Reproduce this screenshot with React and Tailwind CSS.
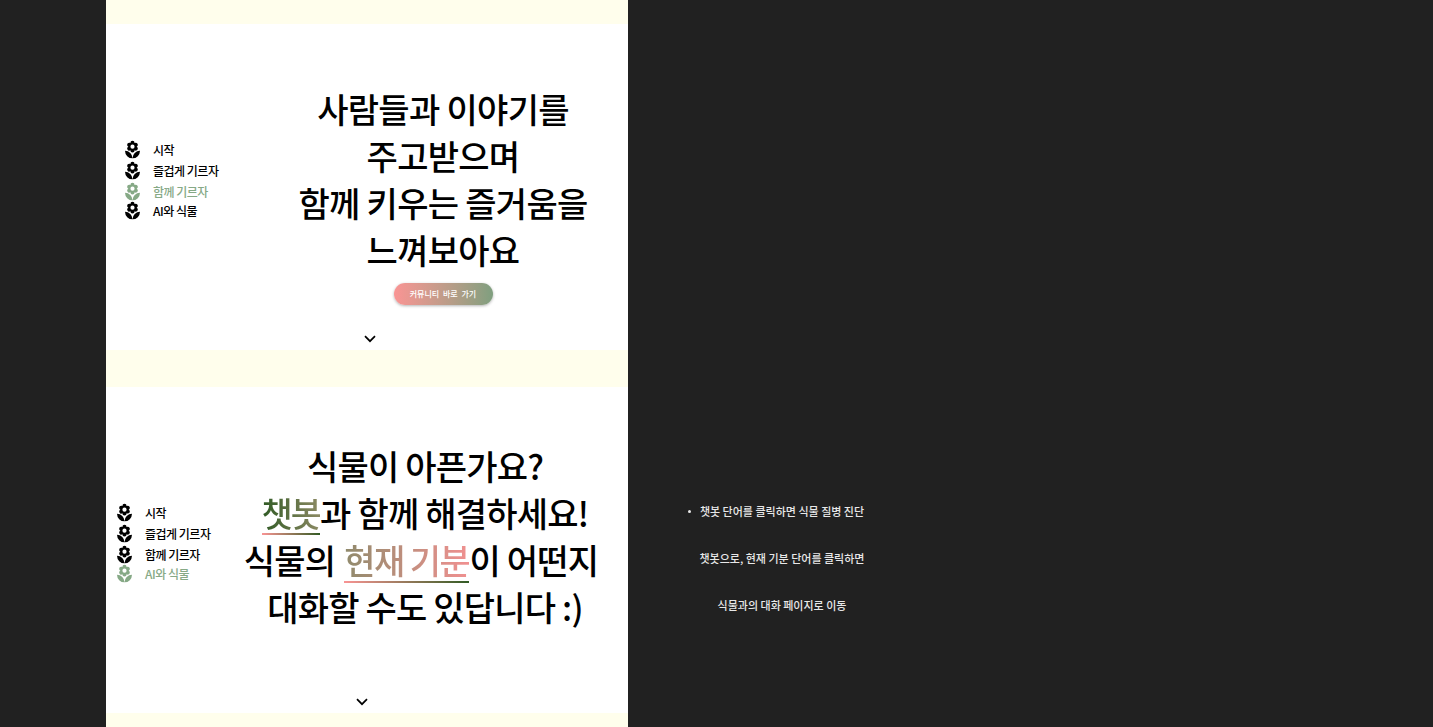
import React from 'react';
import { MdLocalFlorist } from 'react-icons/md';

const NAV = ['시작', '즐겁게 기르자', '함께 기르자', 'AI와 식물'];

const Nav = ({ active, className }) => (
  <ul className={`flex flex-col ${className}`}>
    {NAV.map((label, i) => (
      <li
        key={label}
        className={`flex items-center gap-[10px] text-[12px] tracking-[-0.5px] font-medium ${i === 3 ? 'h-[18px]' : 'h-[21px]'} ${i === active ? 'text-[#86a986]' : 'text-black'}`}
      >
        <MdLocalFlorist className="w-[21px] h-[20px] shrink-0" />
        <span>{label}</span>
      </li>
    ))}
  </ul>
);

const Chevron = ({ className }) => (
  <svg viewBox="0 0 12 8" className={`w-[12px] h-[8px] ${className}`} fill="none" stroke="black" strokeWidth="1.7">
    <path d="M1 1.2 6 6.2 11 1.2" />
  </svg>
);

const Band = ({ h }) => <div className={`bg-[#fffeec] shrink-0 ${h}`} />;

const Underline = ({ className }) => (
  <span className={`absolute left-0 right-0 h-[2px] bg-gradient-to-r from-[#f99494] to-[#2f5a24] ${className}`} />
);

const App = () => {
  return (
    <div
      className="h-screen overflow-hidden bg-[#212121] flex pl-[106px]"
      style={{ fontFamily: '"Noto Sans CJK KR", "Noto Sans", sans-serif' }}
    >
      <div className="w-[522px] shrink-0 flex flex-col">
        <Band h="h-[24px]" />

        {/* first slide */}
        <section className="h-[326px] bg-white shrink-0 flex flex-col">
          <div className="flex flex-1 items-start">
            <Nav active={2} className="mt-[115px] ml-[16px] w-[154px] shrink-0" />
            <div className="flex-1 min-w-0 mt-[61px] pr-[18px] text-center text-[34px] tracking-[-0.7px] leading-[47px] font-medium text-black">
              <p>사람들과 이야기를</p>
              <p>주고받으며</p>
              <p>함께 키우는 즐거움을</p>
              <p>느껴보아요</p>
              <button className="mt-[10px] w-[99px] h-[22px] rounded-full bg-gradient-to-r from-[#f99494] to-[#7f9f7f] text-white text-[8px] tracking-normal [word-spacing:2px] font-medium leading-[22px] shadow-[0_1px_3px_rgba(0,0,0,0.3)] block mx-auto">
                커뮤니티 바로 가기
              </button>
            </div>
          </div>
          <div className="flex justify-center pb-[7px] pl-[6px]">
            <Chevron />
          </div>
        </section>

        <Band h="h-[37px]" />

        {/* second slide */}
        <section className="h-[326px] bg-white shrink-0 flex flex-col">
          <div className="flex flex-1 items-start">
            <Nav active={3} className="mt-[115px] ml-[8px] w-[124px] shrink-0" />
            <div className="flex-1 min-w-0 mt-[55px] pr-[16px] text-center text-[34px] tracking-[-0.8px] leading-[47px] font-medium text-black whitespace-nowrap">
              <p>식물이 아픈가요?</p>
              <p>
                <span className="relative inline-block h-[47px] tracking-[-2px]">
                  <span className="bg-gradient-to-r from-[#2f5a24] to-[#8c8a64] bg-clip-text text-transparent">챗봇</span>
                  <Underline className="top-[44px]" />
                </span>
                과 함께 해결하세요!
              </p>
              <p className="pr-[8px]">
                식물의{' '}
                <span className="relative inline-block h-[47px] ml-[2px] tracking-[-1.5px]">
                  <span className="bg-gradient-to-r from-[#8f8a6c] to-[#f09090] bg-clip-text text-transparent">현재 기분</span>
                  <Underline className="top-[45px]" />
                </span>
                이 어떤지
              </p>
              <p>대화할 수도 있답니다 :)</p>
            </div>
          </div>
          <div className="flex justify-center pb-[7px] pr-[10px]">
            <Chevron />
          </div>
        </section>

        <Band h="h-[14px]" />
      </div>

      {/* presenter notes */}
      <div className="relative ml-[71px] mt-[488px] w-[166px] h-fit text-center text-[11px] leading-[47px] font-medium text-[#e8e8e8] whitespace-nowrap">
        <span className="absolute left-[-11px] top-[22px] w-[3px] h-[3px] rounded-full bg-[#e8e8e8]" />
        <p>챗봇 단어를 클릭하면 식물 질병 진단</p>
        <p>챗봇으로, 현재 기분 단어를 클릭하면</p>
        <p>식물과의 대화 페이지로 이동</p>
      </div>
    </div>
  );
};

export default App;
